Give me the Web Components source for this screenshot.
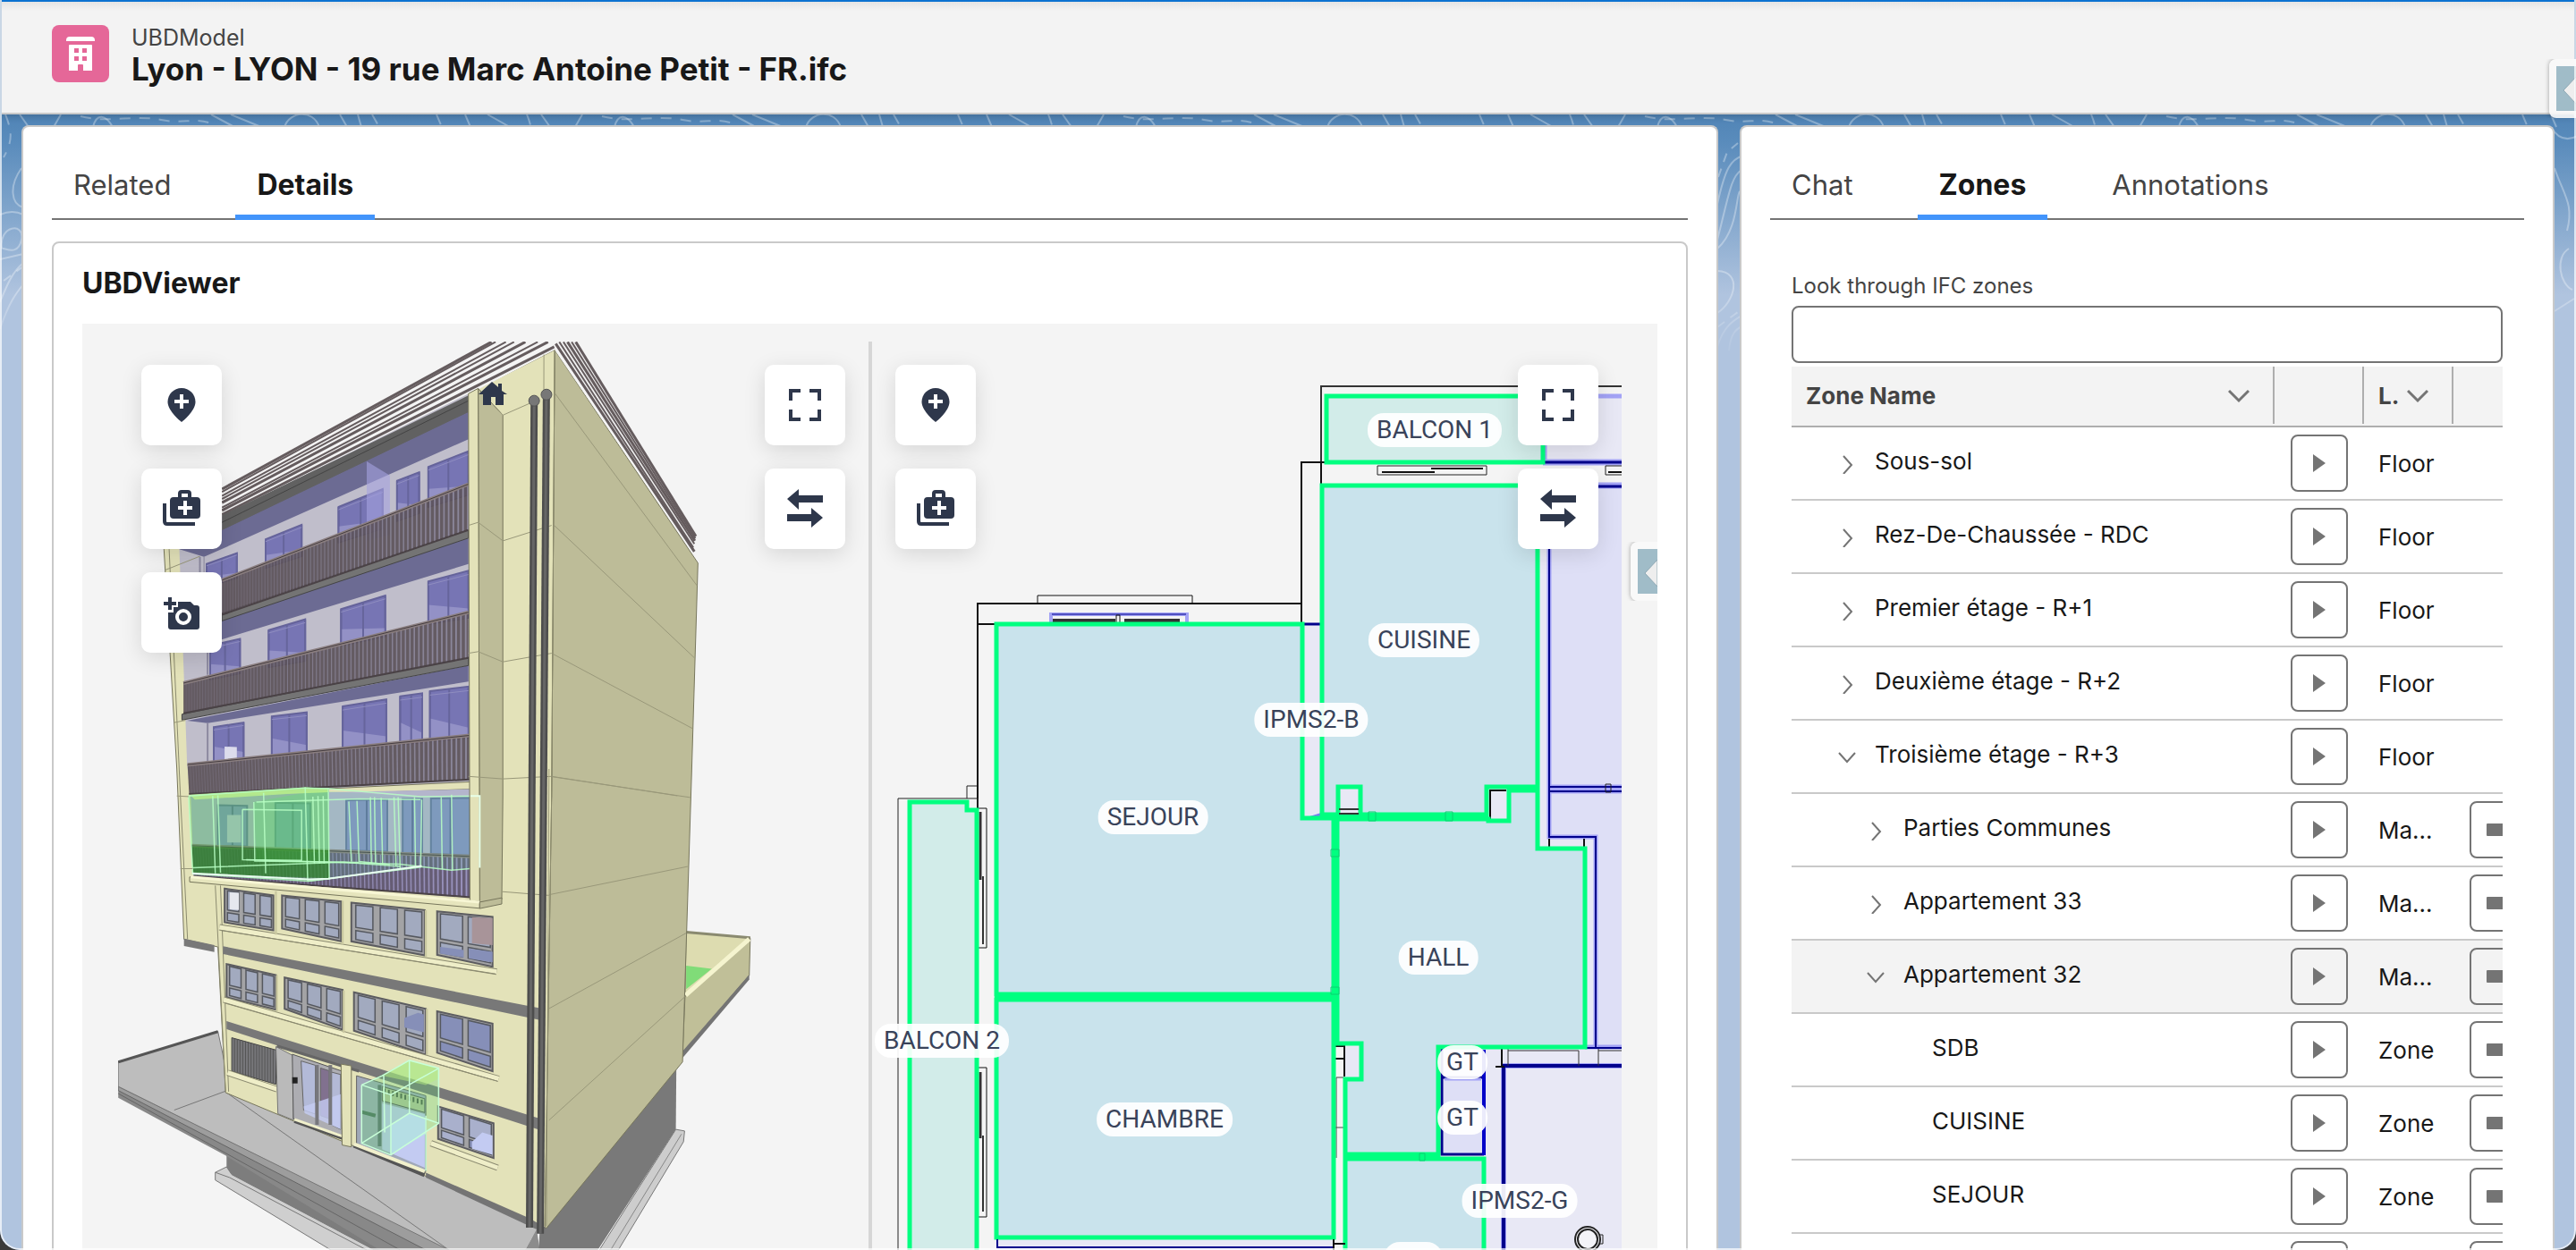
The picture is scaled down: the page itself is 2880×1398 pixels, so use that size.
<!DOCTYPE html>
<html lang="en">
<head>
<meta charset="utf-8">
<title>UBDModel</title>
<style>
  html, body { margin: 0; height: 100%; background: #3a3a3a; overflow: hidden; }
  body { font-family: Inter, "Open Sans", sans-serif; color: #181818; font-size: 26px; }
</style>
</head>
<body>
<ubd-app></ubd-app>

<script>
const define = (name, html, setup) => {
  const tpl = document.createElement('template');
  tpl.innerHTML = html;
  customElements.define(name, class extends HTMLElement {
    constructor() {
      super();
      this.attachShadow({ mode: 'open' }).append(tpl.content.cloneNode(true));
    }
    connectedCallback() { if (setup && !this.ready) { this.ready = true; setup(this, this.shadowRoot); } }
  });
};

/* ---------- icon ---------- */
const ICONS = {
  pin: `<path d="M24 5C15.400 5 8.500 12 8.500 20.500 8.500 31 24 43 24 43S39.500 31 39.500 20.500C39.500 12 32.600 5 24 5z"/><path d="M24 12v16M16 20h16" stroke="#fff" stroke-width="4" fill="none"/>`,
  library: `<path d="M15 11h5V7q0-4 4-4h7q4 0 4 4v4h6q4 0 4 4v16q0 4-4 4H15q-4 0-4-4V15q0-4 4-4zM24 11h7V7h-7z" fill-rule="evenodd"/><path d="M28 15v16M20 23h16" stroke="#fff" stroke-width="4" fill="none"/><path d="M5 18v20q0 3 3 3h31" stroke="currentColor" stroke-width="4" fill="none"/>`,
  camera: `<path d="M20 12h14l4 4h3q3 0 3 3v21q0 3-3 3H12q-3 0-3-3V24h6v-6h5z"/><circle cx="26" cy="29" r="7" fill="none" stroke="#fff" stroke-width="4"/><path d="M11 7v14M4 14h14" stroke="currentColor" stroke-width="4" fill="none"/>`,
  full: `<path d="M8 19V8h11M29 8h11v11M40 29v11H29M19 40H8V29" fill="none" stroke="currentColor" stroke-width="4"/>`,
  swap: `<path d="M4 13 17 2v7h27v8H17v8zM44 34 31 23v7H4v8h27v7z"/>`
};
define('ubd-icon', `<style>:host{display:block;width:48px;height:48px}svg{display:block}</style>
  <svg width="48" height="48" viewBox="0 0 48 48" fill="currentColor" aria-hidden="true"></svg>`,
  (el, r) => { r.querySelector('svg').innerHTML = ICONS[el.getAttribute('name')]; });

/* ---------- floating tool button ---------- */
define('ubd-tool', `<style>
  :host{display:block}
  button{width:90px;height:90px;padding:0;border:0;border-radius:10px;background:#fff;color:#2e374b;
    display:flex;align-items:center;justify-content:center;box-shadow:0 6px 24px rgba(0,0,0,.12)}
  </style><button type="button"><ubd-icon></ubd-icon></button>`,
  (el, r) => {
    r.querySelector('button').setAttribute('aria-label', el.getAttribute('label'));
    const i = document.createElement('ubd-icon'); i.setAttribute('name', el.getAttribute('icon'));
    r.querySelector('ubd-icon').replaceWith(i);
  });

/* ---------- slide-out handle ---------- */
define('ubd-handle', `<style>
  :host{display:block;width:30px;height:66px;overflow:hidden;padding-left:6px;margin-left:-6px}
  button{display:block;width:60px;height:66px;padding:8px;border:0;border-radius:8px;background:rgba(248,248,248,.92);box-shadow:0 0 5px rgba(0,0,0,.35);box-sizing:border-box}
  svg{display:block}
  </style><button type="button" aria-label="Open panel"><svg width="44" height="50" viewBox="0 0 44 50"><path fill="#a0bcc8" d="M0 0h44v50H0z"/><path fill="#eee" stroke="#8ea8b4" d="M8 27 22 12v30z"/></svg></button>`);

/* ---------- page header ---------- */
define('ubd-header', `<style>
  :host{display:flex;align-items:flex-start;gap:25px;box-sizing:border-box;height:128px;padding:26px 56px;border-top:2px solid #0b72d0;border-bottom:2px solid #c9c9c9;
    background:linear-gradient(#e4e4e4,#f3f3f3 10px);box-shadow:0 2px 8px rgba(0,0,0,.2);position:relative}
  .badge{width:64px;height:64px;flex:none}
  .txt{display:flex;flex-direction:column}
  .kind{font-size:25px;line-height:28px;color:#444}
  h1{margin:0;font-size:35px;line-height:42px;font-weight:700}
  </style>
  <svg class="badge" viewBox="0 0 64 64" aria-hidden="true"><rect width="64" height="64" rx="8" fill="#e56798"/>
   <path fill="#fff" d="M20 13h24q4 0 4 4v1H16v-1q0-4 4-4zM20 22h24q1 0 1 1v28H35v-6q0-1-1-1h-4q-1 0-1 1v6H19V23q0-1 1-1z"/>
   <path fill="#e56798" d="M25 26h5v5h-5zM34 26h5v5h-5zM25 35h5v5h-5zM34 35h5v5h-5z"/></svg>
  <div class="txt"><span class="kind"><slot name="kind"></slot></span><h1><slot></slot></h1></div>`);

/* ---------- card ---------- */
define('ubd-card', `<style>
  :host{display:block;box-sizing:border-box;background:#fff;border:2px solid #c9c9c9;border-bottom:0;border-radius:8px 8px 0 0;padding:32px 32px 0;min-width:0;overflow:hidden}
  </style><slot></slot>`);

/* ---------- tab bar ---------- */
define('ubd-tabs', `<style>
  :host{display:block}
  nav{display:flex;gap:48px;border-bottom:2px solid #747474;height:70px}
  button{font:inherit;font-size:31px;line-height:40px;color:#444;background:none;border:0;border-bottom:6px solid transparent;padding:0 24px;height:72px;box-sizing:border-box}
  button[aria-selected=true]{color:#181818;font-size:32px;font-weight:700;border-color:#4294fb}
  </style><nav role="tablist"></nav>`,
  (el, r) => {
    const nav = r.querySelector('nav');
    el.getAttribute('items').split('|').forEach(t => {
      const b = document.createElement('button');
      b.type = 'button'; b.role = 'tab'; b.textContent = t;
      b.setAttribute('aria-selected', t === el.getAttribute('active'));
      nav.append(b);
    });
  });

/* ---------- 3D building ---------- */
function building() {
  const conv = (oy, sy) => s => s.trim().split(/\s+/).map(p => {
    const [x, y] = p.split(',').map(Number);
    return [80 + x * .574, oy + y * sy];
  });
  const a = conv(350, .3444), b = conv(860, .3431);
  const S = pts => pts.map(p => p[0].toFixed(1) + ',' + p[1].toFixed(1)).join(' ');
  let o = '';
  const poly = (pts, fill, extra = '') => o += `<polygon points="${S(pts)}" fill="${fill}" ${extra}/>`;
  const line = (pts, c, w = 1, extra = '') => o += `<polyline points="${S(pts)}" fill="none" stroke="${c}" stroke-width="${w}" ${extra}/>`;
  const lerp = (p, q, t) => [p[0] + (q[0] - p[0]) * t, p[1] + (q[1] - p[1]) * t];
  const EDGE = 'stroke="#77765c" stroke-width="1"';

  /* ground slab and foundations */
  poly(b('302,1255 302,1330 570,1568 640,1568'), '#7d7d7d');
  poly(b('280,1315 302,1297 312,1322 590,1568 505,1568 280,1340'), '#cfcfcf', 'stroke="#777"');
  line(b('280,1315 308,1332 575,1568'), '#777');
  poly(b('91,1045 91,1072 300,1260 600,1568 700,1568'), '#888');
  poly(b('91,1035 91,1048 690,1568 740,1568'), '#9d9d9d', 'stroke="#666"');
  poly(b('91,955 285,855 310,1050 890,1465 908,1500 885,1568 735,1568 91,1035'), '#bdbdbd', 'stroke="#777"');
  line(b('91,955 285,856'), '#555', 3);
  line(b('302,1055 735,1568'), '#777'); line(b('200,1112 300,1050'), '#777');
  line(b('91,1058 640,1568'), '#666');
  poly(b('906,1500 912,1568 885,1568'), '#8c8c8c');
  poly(b('912,1500 1178,960 1177,1175 1025,1568 910,1568'), '#797979');
  poly(b('1177,1175 1194,1180 1192,1215 1065,1568 1028,1568'), '#cdcdcd', 'stroke="#777"');
  line(b('1188,1190 1050,1568'), '#888');

  /* rear annex */
  poly(b('1197,532 1322,550 1195,742'), '#dddcb0', EDGE);
  poly(b('1197,641 1247,651 1197,718'), '#80dc78');
  poly(b('1322,552 1320,672 1190,925 1195,742'), '#c0bf98', EDGE);
  poly(b('1320,670 1320,686 1190,942 1190,920'), '#747474');
  line(b('1197,532 1322,550'), '#8a8a70', 3);
  line(b('1196,738 1320,554'), '#f5f4cf', 5);

  /* main volumes */
  poly([...a('941,120 1220,812'), ...b('1208,0 1190,955 925,1497 912,1497'), ...a('935,1568')], '#bdbc98', EDGE);
  poly([...a('941,120 935,1568'), ...b('922,1497 890,1467 300,1055 285,580 219,555 205,0'), ...a('180,767 180,700 293,640 773,262')], '#e3e2b9', EDGE);
  line([...a('190,767 212,1568'), ...b('226,555')], '#8c8b70');
  line([...b('280,380 300,1050')], '#8c8b70'); line(b('290,380 306,1052'), '#8c8b70');

  /* roof strips */
  poly(a('293,560 822,94 941,94 941,120 293,680'), '#f4f4f4');
  [[293,572,818,94,3],[293,581,826,94,2],[293,594,846,94,2],[293,604,862,94,2],[293,616,884,94,3],[293,632,908,94,2],[293,641,928,94,3],[293,655,940,110,3]]
    .forEach(([x1,y1,x2,y2,w]) => line(a(`${x1},${y1} ${x2},${y2}`), '#655c5e', w));
  poly(a('941,94 983,94 1216,730 1212,785 941,120'), '#f4f4f4');
  [[943,100,1213,775,3],[950,94,1211,762,2],[958,94,1213,750,2],[966,94,1214,740,3],[974,94,1215,732,2],[982,94,1216,725,3]]
    .forEach(([x1,y1,x2,y2,w]) => line(a(`${x1},${y1} ${x2},${y2}`), '#655c5e', w));

  /* recessed facade */
  poly([...a('773,262 776,1568'), ...b('776,60 232,86 226,0'), ...a('225,1460 210,767 210,725 293,660')], '#c0becb');
  poly(a('293,657 773,268 773,324 293,708'), '#616161');
  line(a('293,680 773,285'), '#444');
  poly(a('293,706 773,322 773,410 258,792 210,767'), '#6c6b93');
  const win = (p, n = 2) => {
    poly(p, '#7775b4', 'stroke="#65639a" stroke-width="2"');
    const [tl, tr, br, bl] = p;
    poly([lerp(tl, bl, .55), lerp(tr, br, .8), br, bl], '#9391c6');
    for (let i = 0; i <= n; i++) line([lerp(tl, tr, i / n), lerp(bl, br, i / n)], '#66659c', 2);
    line([lerp(tl, bl, .08), lerp(tr, br, .08)], '#8f8dc0', 1);
  };
  ['263,815 322,780 322,860 263,890','378,735 448,688 448,790 378,828','520,630 606,572 606,700 520,745','634,545 677,517 677,650 634,675','695,500 773,449 773,590 695,630']
    .forEach(s => win(a(s)));
  poly(a('575,482 620,528 620,720 575,740'), '#a5a2e0', 'fill-opacity=".6"');
  poly(a('293,998 773,730 773,815 258,1078'), '#6c6b93');
  ['270,1080 328,1058 328,1170 270,1190','384,1030 455,995 455,1130 384,1150','525,962 611,918 611,1050 525,1080','695,872 773,837 773,990 695,1010']
    .forEach(s => win(a(s)));
  poly(a('225,1324 773,1145 773,1197 265,1332'), '#6c6b93');
  ['277,1345 335,1330 335,1450 277,1460','390,1310 458,1297 458,1430 390,1440','528,1278 613,1255 613,1405 528,1420','640,1245 683,1235 683,1395 640,1400','698,1228 773,1213 773,1380 698,1390']
    .forEach(s => win(a(s)));
  poly(a('298,1408 322,1410 322,1450 298,1450'), '#dcdcec');
  line(a('250,792 250,870'), '#8d8aa0', 2); line(a('258,792 258,870'), '#8d8aa0', 1);
  line(a('265,1090 265,1175'), '#8d8aa0', 2); line(a('265,1332 265,1455'), '#8d8aa0', 2);

  /* balconies with slatted railings */
  const rail = (tl, tr, br, bl, base = '#5a5057', slat = '#918da3') => {
    poly([tl, tr, br, bl], base, 'fill-opacity=".9"');
    const w = tr[0] - tl[0];
    for (let x = 3; x < w; x += 3 + 2.500 * x / w) {
      const t = x / w;
      line([lerp(tl, tr, t), lerp(bl, br, t)], slat, .500 + t * 1.400, `stroke-opacity="${(.4 + t * .5).toFixed(2)}"`);
    }
    line([tl, tr], '#8b7f80', 4); line([tl, tr], '#453d40', 1);
    line([bl, br], '#4a4246', 2);
  };
  poly(a('293,975 773,703 773,731 293,1000'), '#747474', 'stroke="#444"');
  rail(...a('293,868 773,556 773,705 293,980'));
  poly(a('215,1303 773,1118 773,1145 215,1322'), '#747474', 'stroke="#444"');
  rail(...a('218,1202 773,972 773,1120 218,1300'));
  rail(...a('226,1467 775,1372 775,1515'), b('229,82')[0]);
  poly(b('500,64 776,42 776,66 500,82'), '#e3e2b9', EDGE);

  /* selected storey */
  poly(b('232,86 776,66 776,420 238,350'), '#b4b5cc');
  ['285,118 342,120 342,252 285,250','397,110 465,112 465,262 397,258','535,102 615,100 615,270 535,265','645,98 683,98 683,276 645,274','700,96 776,94 776,282 700,276']
    .forEach(s => { const p = b(s), [tl, tr, br, bl] = p; poly(p, '#8591c4', 'stroke="#66749f" stroke-width="2"'); line([lerp(tl, tr, .5), lerp(bl, br, .5)], '#5f6c9c', 2); });
  poly(b('303,150 330,150 330,240 303,240'), '#c0c4dc');
  rail(...b('234,250 776,285 776,418 238,350'), '#5c526a', '#a09ac8');
  poly(b('228,88 460,60 500,64 502,358 462,366 236,342'), '#4ec85a', 'fill-opacity=".38"');
  poly(b('355,108 500,64 502,310 360,300'), '#5ee86a', 'fill-opacity=".3"');
  poly(b('500,72 680,92 795,88 795,322 740,330 680,322 502,356'), '#5ec8a0', 'fill-opacity=".18"');
  poly(b('235,252 500,265 502,356 236,342'), '#1b7a12', 'fill-opacity=".5"');
  poly(b('230,84 455,60 500,64 500,76 420,82 240,100'), '#b7ee8a', 'fill-opacity=".85"');
  poly(b('777,88 795,88 795,322 777,324'), '#c6ea9a');
  ['228,88 455,62 500,64 502,358 460,366 236,342 228,88','275,88 280,340','285,86 290,338','374,78 378,340','333,132 448,135 448,298 333,296 333,132','455,60 460,366','500,64 680,90 795,88 795,322 740,330 640,310 340,296','460,366 680,320 682,100','355,108 357,300 560,305','236,322 530,304 640,318','540,106 545,302','556,104 560,302 620,312','582,92 584,308','590,92 592,308','603,94 606,312','628,92 632,318','636,92 640,324','668,92 670,320','720,92 722,326','740,84 742,330','360,108 560,98 680,100','470,90 473,308','480,88 483,308','490,88 492,308']
    .forEach(s => line(b(s), '#b9ffc4', 1.500, 'stroke-opacity=".85"'));
  line(b('235,340 462,360 500,358 682,316'), '#e8fff0', 2);

  /* corner column, ledge */
  poly([...a('792,245 840,332 840,1568'), ...b('838,425 795,435')], '#bdbc98', EDGE);
  poly([...a('773,262 792,245'), ...b('795,434 776,430')], '#e3e2b9', EDGE);
  poly(b('230,352 795,432 795,454 230,368'), '#e6e5bd', EDGE);
  line(b('232,352 795,434'), '#f7f6d4', 3);
  poly(b('795,434 838,420 838,440 795,455'), '#bdbc98', EDGE);
  line(b('777,88 795,88 795,322'), '#e8ffe8', 2);

  /* dark string courses */
  poly(b('219,553 278,574 278,597 219,577'), '#787878');
  poly(b('295,578 912,780 912,818 295,603'), '#787878');
  poly(b('302,822 912,1140 912,1177 302,848'), '#787878');
  poly(b('690,1316 890,1463 925,1497 905,1500 690,1332'), '#747474');

  /* ribbon windows */
  const ribbon = (x1, x2, tl, tr, bl, br, n, fill = '#a2aabf') => {
    const P = b(`${x1},${tl} ${x2},${tr} ${x2},${br} ${x1},${bl}`);
    poly(P, '#a3a3a5', 'stroke="#5c5c60" stroke-width="2"');
    const at = (u, v) => lerp(lerp(P[0], P[1], u), lerp(P[3], P[2], u), v);
    for (let i = 0; i < n; i++) {
      const u0 = i / n + .06, u1 = (i + 1) / n - .04;
      poly([at(u0, .05), at(u1, .05), at(u1, .62), at(u0, .62)], fill, 'stroke="#55585f" stroke-width="1.5"');
      poly([at(u0, .7), at(u1, .7), at(u1, .93), at(u0, .93)], i > 0 && fill !== '#a2aabf' ? '#868fb8' : fill, 'stroke="#55585f" stroke-width="1.5"');
    }
  };
  ribbon(298,393,390,412,500,526,3); ribbon(410,525,412,432,520,562,3); ribbon(545,688,436,460,562,608,3); ribbon(712,820,464,482,606,645,2);
  poly(b('308,402 326,404 326,460 308,458'), '#e6e8ee');
  poly(b('780,483 820,486 820,574 780,568'), '#a89499');
  poly(b('718,580 764,590 764,615 718,602'), '#868fb8'); poly(b('774,586 820,596 820,630 774,618'), '#868fb8');
  ribbon(302,398,636,672,744,785,3); ribbon(415,528,680,720,782,850,3); ribbon(550,690,728,782,853,932,3); ribbon(712,820,790,830,925,985,2,'#868fb8');
  poly(b('648,812 675,795 686,800 686,858 648,842'), '#868fb8');
  const sill = s => { line(b(s), '#8b8a70', 7); line(b(s), '#efeec8', 5); };
  sill('288,516 828,661'); sill('296,752 832,1010');
  line(b('290,526 826,668'), '#8b8a70'); line(b('300,764 830,1018'), '#8b8a70');
  [[400,405,398,540],[530,540,430,572],[692,705,460,612],[402,412,672,790],[532,545,722,860],[694,708,782,932]].forEach(([x1, x2, y1, y2]) => poly(b(`${x1 - 4},${y1} ${x1},${y1} ${x1},${y2} ${x1 - 4},${y2}`), '#c9c8a0'));

  /* ground floor */
  const G = b('312,876 398,916 398,1028 312,985');
  poly(G, '#77777a', 'stroke="#444"');
  for (let i = 1; i < 16; i++) line([lerp(G[0], G[1], i / 16), lerp(G[3], G[2], i / 16)], '#555', 1);
  sill('304,990 400,1044');
  poly(b('398,905 432,935 432,1145 402,1124'), '#bababa', 'stroke="#777"');
  poly(b('430,930 527,985 527,1195 432,1140'), '#adadb2', 'stroke="#555"');
  poly(b('447,952 475,966 475,1125 452,1112'), '#b3bad8', 'stroke="#666"');
  poly(b('485,975 502,984 502,1140 485,1130'), '#81718f', 'stroke="#666"');
  poly(b('506,988 524,996 524,1175 506,1160'), '#b3b9d5', 'stroke="#666"');
  poly(b('452,1100 524,1060 524,1175 454,1122'), '#c6cdf4', 'fill-opacity=".8"');
  [478, 504].forEach(x => line(b(`${x},965 ${x},1160`), '#77777c', 4));
  line(b('400,903 560,985'), '#666', 3); line(b('435,1005 435,1025'), '#222', 6);
  line(b('434,1148 527,1203'), '#555', 4); line(b('434,1142 527,1197'), '#f1f0cc', 3);
  poly(b('555,1000 690,1065 690,1312 555,1222'), '#a0a8b8', 'stroke="#666"');
  poly(b('605,1090 688,1125 688,1300 605,1240'), '#c3cbf2');
  poly(b('605,1035 688,1075 688,1120 605,1082'), '#b5c39a', 'stroke="#555"');
  for (let i = 0; i < 10; i++) line(b(`${610 + i * 8},${1042 + i * 4} ${610 + i * 8},${1058 + i * 4}`), '#4c5a48', 2);
  line(b('600,1030 600,1230'), '#5d6a70', 4); line(b('565,1118 592,1130'), '#4f6a5f', 4);
  line(b('550,1226 688,1322'), '#555', 6); line(b('550,1222 688,1312'), '#f1f0cc', 4);
  poly(b('525,962 545,968 545,1232 527,1226'), '#e3e2b9', EDGE);
  ribbon(714,822,1100,1155,1206,1268,2,'#a9b0cc');
  poly(b('780,1215 800,1185 820,1195 820,1258 780,1238'), '#c3cbf2');
  sill('700,1220 830,1300');
  poly(b('565,1030 658,950 715,975 715,1155 622,1258 565,1220'), '#62d878', 'fill-opacity=".3"');
  poly(b('605,1000 658,952 714,976 714,1010 690,1030'), '#b6f080', 'fill-opacity=".5"');
  poly(b('622,1160 658,1122 690,1140 690,1190 622,1256'), '#b9e2ea', 'fill-opacity=".8"');
  ['565,1030 605,1000 658,950 715,975 715,1155 622,1258 565,1220 565,1030','565,1030 622,1062 715,976','622,1062 622,1258','658,950 658,1122 715,1155','565,1220 658,1122','608,1000 610,1185','690,1130 690,1310']
    .forEach(s => line(b(s), '#c8ffd8', 1.500));

  /* wall seams */
  ['941,260 1218,885','940,690 1213,1120','935,1105 1210,1350','935,1505 1180,1568','773,690 792,680 840,740 935,690','773,1105 792,1100 840,1133 935,1105','773,1505 840,1513 935,1505','820,295 840,332 900,288','182,835 250,790','200,1330 222,1323','920,135 918,1568']
    .forEach(s => line(a(s), '#99987a'));
  ['935,25 1205,93','930,410 1200,318','928,783 1197,535','930,1145 1195,742','838,400 930,412','205,88 228,90','212,325 236,325','930,0 925,1490']
    .forEach(s => line(b(s), '#99987a'));
  line([...a('941,120 935,1568'), ...b('922,1490')], '#8d8c6e');

  /* downpipes */
  [[...a('901,285'), ...b('892,1495')], [...a('925,265'), ...b('913,1515')]].forEach(p => {
    line(p, '#4d4d4d', 8); line(p, '#666', 3);
    o += `<circle cx="${p[0][0]}" cy="${p[0][1]}" r="6" fill="#777" stroke="#555"/>`;
  });

  /* home marker */
  o += `<path d="M535 441 550 427 557 433v-4h4v8l6 4h-4v12h-9v-9h-5v9h-9v-12z" fill="#2e374b"/>`;
  return `<svg width="839" height="1016" viewBox="132 382 839 1016" aria-label="Building model">${o}</svg>`;
}

/* ---------- floor plan drawing ---------- */
function plan() {
  const K = '#111', N = '#00008c', G = '#00ff80', L = '#a3a3f5';
  const f = (d, c) => `<path d="${d}" fill="${c}"/>`;
  const s = (d, c, w) => `<path d="${d}" fill="none" stroke="${c}" stroke-width="${w}"/>`;
  const sejour = 'M1114 698H1456V915H1491V1112H1114z', cuisine = 'M1478 543H1719V880H1662V911H1521V880H1496V911H1478z',
    hall = 'M1495 916H1664V918H1687V884H1719V949H1772V1171H1608V1291H1504V1207H1522V1167H1495z';
  return `<svg width="838" height="1016" viewBox="975 382 838 1016" aria-label="Floor plan">` +
    f('M1457 698H1478V913H1457zM1496 880H1521V911H1496zM1662 884H1687V918H1662zM1719 543H1813V1398H1659V1171H1772V949H1719zM1727 443H1813V517H1727zM1504 1167H1522V1207H1504zM1114 1386H1491V1398H1114z', '#e8e8f5') +
    f('M1732 543H1813V1171H1783V936H1732zM1612 1173H1659V1292H1612z', '#dedff6') +
    s('M1727 443H1813', L, 5) + s('M1728 443V517', L, 3) +
    s('M1725 517H1813M1732 543H1813', L, 7) + s('M1725 517H1813M1719 544H1813', N, 3) +
    s('M1732 545V936H1784V1171M1732 880H1813M1732 885H1813M1772 1171H1813', L, 5) +
    s('M1732 545V936H1784V1171M1732 880H1813M1732 885H1813M1772 1172H1813', N, 2) +
    s('M1795 877h6v9h-6z', '#222', 1) + s('M1732 938v11M1771 938v11', K, 2) +
    s('M1681 1398V1192H1813', L, 6) + s('M1681 1398V1192H1813', N, 4) +
    s('M1679 1172v20M1672 1193h10', K, 2) + s('M1686 1173v19M1686 1175H1765V1192M1787 1173v19M1787 1175h26', '#333', 1) +
    s('M1612 1173V1291H1659', N, 3) + s('M1613 1205H1658', N, 3) + s('M1615 1207H1656', L, 3) + s('M1659 1174V1292', '#0000c8', 4) +
    s('M1477 543V432H1813', '#333', 2) + s('M1482 517H1455V697M1477 517V543', K, 2) +
    s('M1540 521h122v10h-122zM1795 521h22v10h-22z', '#222', 1) + s('M1545 528h59M1600 524h58M1798 528h20', K, 2) +
    s('M1093 1060V675H1455M1093 698H1114', K, 2) + s('M1160 675v-9h173v9', K, 1) +
    s('M1175 698V687H1327V698', L, 4) + s('M1176 687H1326', N, 1) + s('M1177 694h70M1257 694h62', '#333', 4) + s('M1248 688h4v10h-4z', K, 1) +
    s('M1456 698h21', N, 3) + f('M1461 914 1477 909v5z', '#7a7af0') +
    s('M1004 1398V893H1093M1081 893V879H1093', '#222', 1) + s('M1093 893V1398', '#333', 1) +
    s('M1093 904h10v156h-10M1093 1194h10v167h-10', K, 1) + s('M1096 908v76M1096 1199v74', '#333', 3) + s('M1099 980v76M1099 1270v85', '#333', 2) +
    s('M1497 905h22M1497 910h22M1666 918V884h18', K, 2) + s('M1492 1170h11v34M1492 1184h11', K, 2) + s('M1494 1205v90M1492 1261h12M1494 1205h8', '#444', 1) +
    f(sejour + 'M1114 1118H1491V1384H1114z' + cuisine + hall + 'M1504 1296H1659V1400H1504z', '#c9e3ec') +
    f('M1017 897H1081V906H1092V1400H1017zM1483 443H1725V517H1483z', '#d2ece9') +
    s(sejour + 'M1114 1118H1491V1384H1114z' + cuisine + hall + 'M1504 1296H1659V1404H1504z' + 'M1017 897H1081V906H1092V1404H1017zM1483 443H1725V517H1483z', G, 5) +
    s('M1112 1115H1493M1478 913H1664M1504 1294H1608M1493 915V1167', G, 4) +
    s('M1530 908h8v10h-8zM1616 908h8v10h-8zM1488 950h9v8h-9zM1488 1104h9v8h-9zM1587 1290h6v8h-6z', '#0ad070', 1) +
    s('M1497 905h22M1497 910h22', '#333', 2) + s('M1503 1172v32', K, 2) +
    s('M1115 1386V1395H1490', N, 2) + s('M1491 1386v12M1491 1391h13', K, 2) +
    `<ellipse cx="1775" cy="1386" rx="14" ry="14" fill="#f4f4f8" stroke="#222" stroke-width="2"/><ellipse cx="1775" cy="1386" rx="11" ry="11" fill="none" stroke="#222" stroke-width="2"/>` +
    s('M1788 1381h4v10h-4', '#222', 1) + `<rect x="1547" y="1389" width="66" height="38" rx="18" fill="#fff" fill-opacity=".92"/></svg>`;
}

define('ubd-label', `<style>:host{position:absolute;transform:translate(-50%,-50%);padding:0 10px;border-radius:18px;background:rgba(255,255,255,.92);
  font-family:Roboto,sans-serif;font-size:28px;line-height:38px;color:#39435a;white-space:nowrap}</style><slot></slot>`);

define('ubd-plan', `<style>:host{display:block;position:relative}svg{display:block}</style><div class="d"></div>`,
  (el, r) => {
    r.querySelector('.d').innerHTML = plan();
    [['BALCON 1',1604,481],['CUISINE',1592,716],['IPMS2-B',1466,805],['SEJOUR',1289,914],['HALL',1608,1071],['BALCON 2',1053,1164],['CHAMBRE',1302,1252],['GT',1635,1188],['GT',1635,1250],['IPMS2-G',1699,1343]]
      .forEach(([t, x, y]) => {
        const l = document.createElement('ubd-label');
        l.textContent = t; l.style.left = x - 975 + 'px'; l.style.top = y - 382 + 'px';
        r.append(l);
      });
  });

define('ubd-building', `<style>:host{display:block}svg{display:block}</style><div class="d"></div>`,
  (el, r) => { r.querySelector('.d').innerHTML = building(); });

/* ---------- viewer ---------- */
define('ubd-viewer', `<style>
  :host{display:grid;grid-template-columns:883fr 878fr;background:#f4f4f4;padding-top:20px;position:relative}
  .pane{position:relative;overflow:hidden;height:1040px}
  .left{padding-left:40px;border-right:4px solid #d6d6d6}
  .right{padding-right:40px}
  .tools{position:absolute;top:26px;display:flex;flex-direction:column;gap:26px}
  .left .tools.a{left:66px}.left .tools.b{right:26px}
  .right .tools.a{left:26px}.right .tools.b{right:66px}
  .clip{overflow:hidden}
  ubd-handle{position:absolute;right:0;top:244px}
  </style>
  <div class="pane left"><div class="clip"><ubd-building></ubd-building></div>
    <div class="tools a"><ubd-tool icon="pin" label="Add pin"></ubd-tool><ubd-tool icon="library" label="Add to library"></ubd-tool><ubd-tool icon="camera" label="Add photo"></ubd-tool></div>
    <div class="tools b"><ubd-tool icon="full" label="Full screen"></ubd-tool><ubd-tool icon="swap" label="Swap views"></ubd-tool></div></div>
  <div class="pane right"><div class="clip"><ubd-plan></ubd-plan></div>
    <div class="tools a"><ubd-tool icon="pin" label="Add pin"></ubd-tool><ubd-tool icon="library" label="Add to library"></ubd-tool></div>
    <div class="tools b"><ubd-tool icon="full" label="Full screen"></ubd-tool><ubd-tool icon="swap" label="Swap views"></ubd-tool></div></div>
  <ubd-handle></ubd-handle>`);

define('ubd-panel', `<style>
  :host{display:block;margin-top:24px;border:2px solid #c9c9c9;border-radius:8px;padding:24px 32px}
  h2{margin:0 0 24px;font-size:32px;line-height:42px;font-weight:700}
  </style><h2><slot name="title"></slot></h2><slot></slot>`);

/* ---------- zone tree ---------- */
define('ubd-zones', `<style>
  :host{display:block;padding:58px 24px 0}
  label{display:block;font-size:24px;line-height:32px;color:#444;margin-bottom:6px}
  input{display:block;width:100%;height:64px;box-sizing:border-box;border:2px solid #747474;border-radius:8px;background:#fff;font:inherit;padding:0 24px;margin-bottom:4px}
  .scroll{overflow:hidden}
  table{border-collapse:separate;border-spacing:0;table-layout:fixed;width:calc(100% + 45px);font-size:26px;line-height:36px}
  th{height:68px;box-sizing:border-box;padding:0 0 2px;background:#f3f3f3;border-bottom:2px solid #aeaeae;text-align:left;color:#444;font-size:26px}
  th div{display:flex;align-items:center;justify-content:space-between;box-sizing:border-box;height:64px;padding:2px 26px 0 16px;border-right:2px solid #aeaeae}
  th.last div{border:0}
  td{height:82px;box-sizing:border-box;padding:0 0 0 18px;border-bottom:2px solid #c9c9c9;overflow:hidden;white-space:nowrap}
  td.lvl{padding:2px 0 0 16px}
  tr.on td{background:#f3f3f3}
  .name{display:flex;align-items:center;gap:19px}
  .name span{padding-bottom:4px}
  .d1{padding-left:32px}.d2{padding-left:64px}.d3{padding-left:96px}
  .tg{width:24px;height:24px;padding:0;border:0;background:none;display:block}
  .bt{width:64px;height:64px;padding:0;border:2px solid #747474;border-radius:8px;background:transparent;display:flex;align-items:center;justify-content:center}
  svg{display:block}
  </style>
  <label for="q">Look through IFC zones</label><input id="q" type="text">
  <div class="scroll"><table>
  <colgroup><col><col style="width:100px"><col style="width:100px"><col style="width:100px"></colgroup>
  <thead><tr>
    <th><div>Zone Name <svg width="24" height="16" viewBox="0 0 24 16"><path d="M1 2 12 13 23 2" fill="none" stroke="#747474" stroke-width="3"/></svg></div></th>
    <th><div></div></th>
    <th><div><span>L.</span><svg width="24" height="16" viewBox="0 0 24 16"><path d="M1 2 12 13 23 2" fill="none" stroke="#747474" stroke-width="3"/></svg></div></th>
    <th class="last"><div></div></th></tr></thead><tbody></tbody></table></div>`,
  (el, r) => {
    const rows = [['Sous-sol',1,0,'Floor'],['Rez-De-Chaussée - RDC',1,0,'Floor'],['Premier étage - R+1',1,0,'Floor'],['Deuxième étage - R+2',1,0,'Floor'],['Troisième étage - R+3',1,1,'Floor'],
      ['Parties Communes',2,0,'Ma...'],['Appartement 33',2,0,'Ma...'],['Appartement 32',2,1,'Ma...'],['SDB',3,-1,'Zone'],['CUISINE',3,-1,'Zone'],['SEJOUR',3,-1,'Zone'],['',3,-1,'']];
    r.querySelector('tbody').innerHTML = rows.map(([n, d, open, t]) => `<tr class="${n === 'Appartement 32' ? 'on' : ''}">
      <td><div class="name d${d}">${open < 0 ? '<i class="tg"></i>' : `<button class="tg" type="button" aria-label="Toggle ${n}"><svg width="24" height="24" viewBox="0 0 24 24"><path d="${open ? 'M3 8 12 18 21 8' : 'M8 4 17 14 8 24'}" fill="none" stroke="#747474" stroke-width="2"/></svg></button>`}<span>${n}</span></div></td>
      <td><button class="bt" type="button" aria-label="Show"><svg width="14" height="20" viewBox="0 0 14 20"><path fill="#747474" d="M0 0 14 10 0 20z"/></svg></button></td>
      <td class="lvl">${t}</td>
      <td>${d > 1 ? '<button class="bt" type="button" aria-label="Details"><svg width="26" height="14" viewBox="0 0 26 14"><rect width="26" height="14" rx="1" fill="#747474"/></svg></button>' : ''}</td></tr>`).join('');
  });

/* ---------- application shell ---------- */
define('ubd-app', `<style>
  :host{display:flex;flex-direction:column;height:100vh;overflow:hidden;position:relative;border-radius:0 0 22px 22px;background:linear-gradient(#5084b6 128px,#5a8cbc 160px,#b0c4df 330px);isolation:isolate}
  .topo{position:absolute;left:0;top:128px;width:100%;height:280px;z-index:-1}
  ubd-header{flex:none;margin:0 2px}
  main{flex:1;min-height:0;display:grid;grid-template-columns:1897fr 911fr;gap:24px;padding:12px 24px 0}
  .edge{position:absolute;inset:0;border:2px solid rgba(255,255,255,.7);border-top:0;border-radius:0 0 22px 22px;pointer-events:none}
  .side{position:absolute;right:0;top:66px}
  </style>
  <svg class="topo" aria-hidden="true"><defs><pattern id="t" width="583" height="280" patternUnits="userSpaceOnUse">
    <g fill="none" stroke="#fff" stroke-opacity=".32" stroke-width="2">
    <path d="M22 0 32 14M68 0 60 14M104 14C108-2 118 0 126 14M236 0 262 14M258 0 292 14M318 14C324-4 350-6 357 14M380 0 388 14M400 0 404 14M545 0 570 14M520 0 526 14"/>
    <path stroke-dasharray="12 10" d="M90 2C120 10 150 0 180 6S220 0 244 14M416 0 424 14M488 0 494 14M6 0C14 20 14 30 4 48"/>
    <path d="M24 60C10 80 12 100 26 104M0 112Q14 106 26 112M2 150C-2 124 28 120 24 140S4 148 2 150M0 162 26 156M0 210C8 190 14 176 26 166M0 240C10 210 18 200 26 190"/>
    <path stroke-dasharray="10 8" d="M4 186 26 170"/>
    <path d="M171 100C180 60 186 50 200 46M171 140C184 90 186 70 198 62M171 150C194 130 192 90 196 86M171 175C200 176 190 210 171 222M171 260C178 236 190 230 200 224M184 264C186 244 192 240 200 236"/>
    <path stroke-dasharray="10 8" d="M172 70 182 42 194 32M171 238 198 218"/>
    <path d="M520 14C528 28 538 30 550 24M524 60C534 90 546 100 538 130M540 150C524 160 530 190 544 196M524 220 546 206"/></g></pattern>
    <linearGradient id="g" x2="0" y2="1"><stop offset=".7" stop-color="#fff"/><stop offset="1" stop-color="#000"/></linearGradient><mask id="m"><rect width="100%" height="280" fill="url(#g)"/></mask></defs>
    <rect width="100%" height="280" fill="url(#t)" mask="url(#m)"/></svg>
  <ubd-header><span slot="kind">UBDModel</span>Lyon - LYON - 19 rue Marc Antoine Petit - FR.ifc</ubd-header>
  <main>
    <ubd-card><ubd-tabs items="Related|Details" active="Details"></ubd-tabs>
      <ubd-panel><span slot="title">UBDViewer</span><ubd-viewer></ubd-viewer></ubd-panel></ubd-card>
    <ubd-card><ubd-tabs items="Chat|Zones|Annotations" active="Zones"></ubd-tabs><ubd-zones></ubd-zones></ubd-card>
  </main>
  <ubd-handle class="side"></ubd-handle>
  <div class="edge"></div>`);
</script>
</body>
</html>
